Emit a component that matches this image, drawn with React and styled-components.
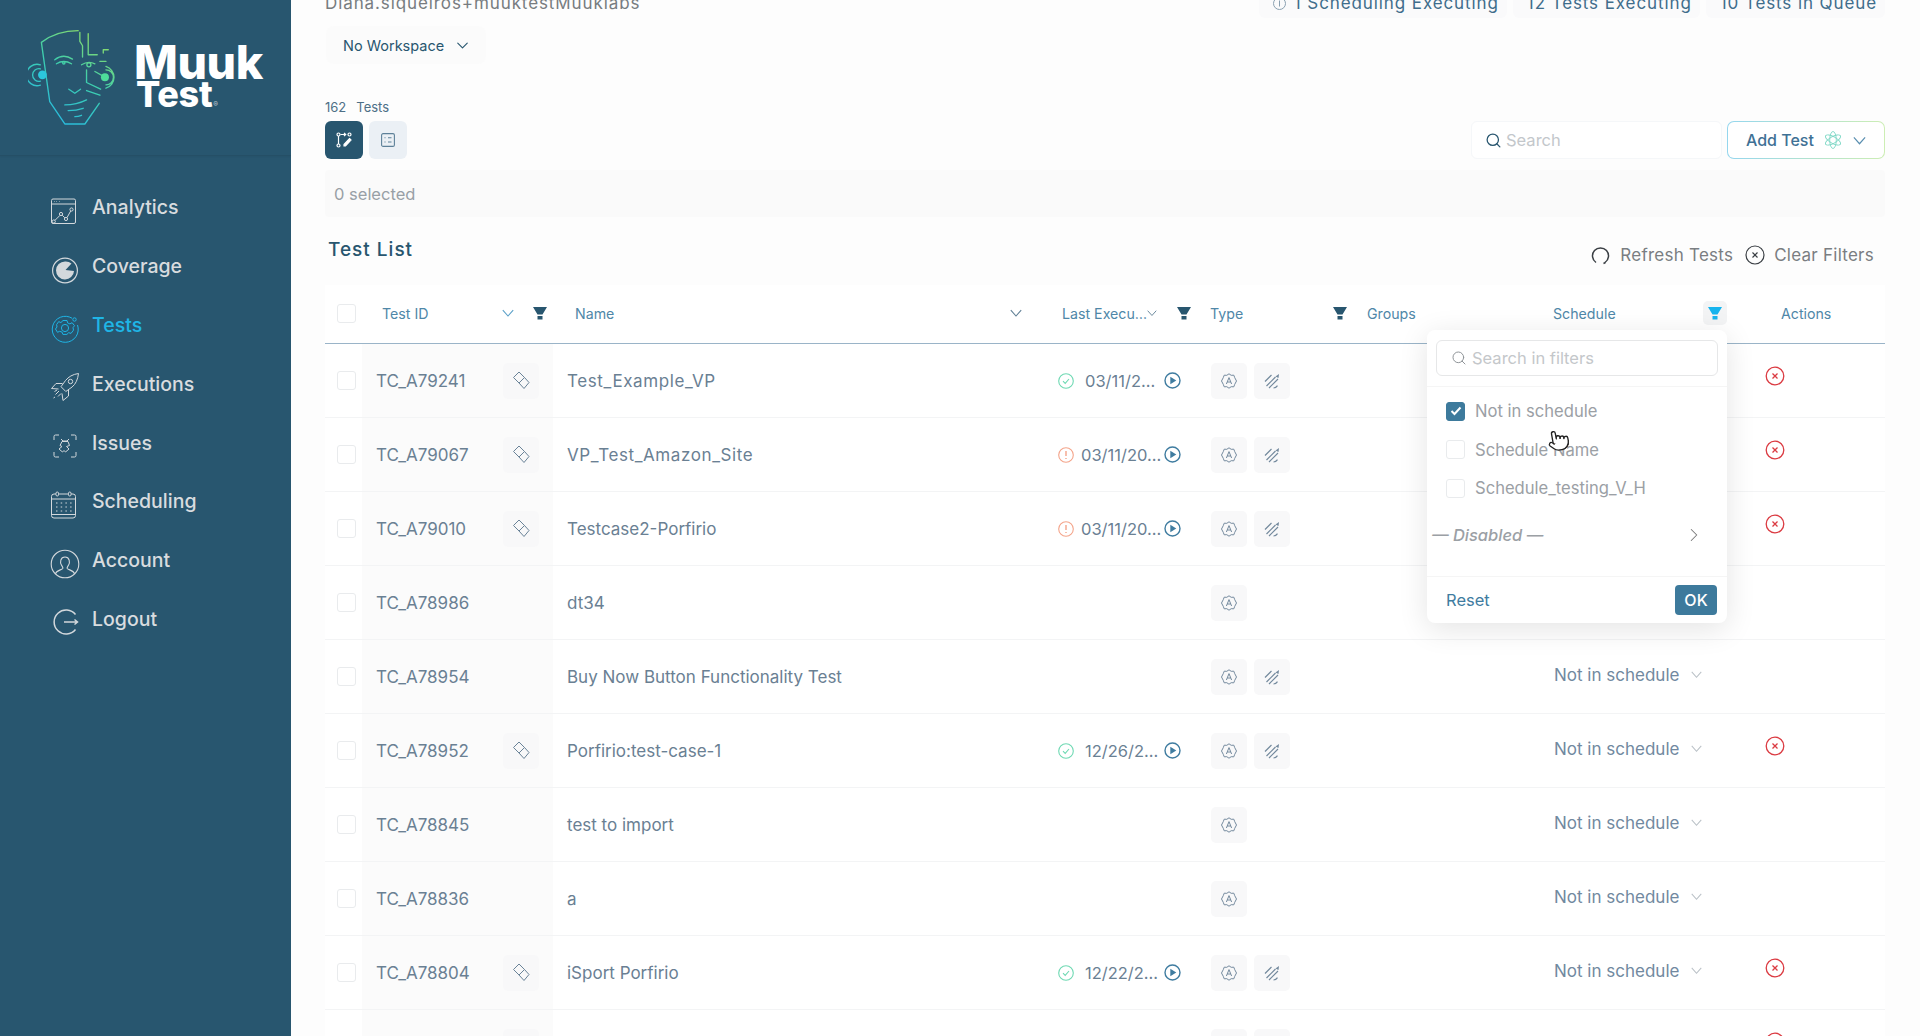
import React from 'react';
import styled, { createGlobalStyle } from 'styled-components';
import { Pointer, ChevronDown, ChevronRight, Search as SearchGlyph } from 'lucide-react';

const Global = createGlobalStyle`
  html, body { margin: 0; padding: 0; height: 100%; overflow: hidden; background: #fdfdfd; }
  * { box-sizing: border-box; }
  body { font-family: Inter, "Noto Sans", "Liberation Sans", sans-serif; }
`;

const Page = styled.div`display: flex; width: 1920px; height: 1036px; overflow: hidden; background: #fdfdfd;`;
const Sidebar = styled.aside`flex: 0 0 291px; background: #28566f; display: flex; flex-direction: column; box-shadow: 1px 0 3px rgba(0,0,0,.08);`;
const Brand = styled.div`height: 156px; padding: 28px 0 0 28px; display: flex; align-items: flex-start; border-bottom: 1px solid #254f66; box-shadow: 0 1px 2px rgba(0,0,0,.05);`;
const Wordmark = styled.div`margin: 14.5px 0 0 14px; color: #fff; font-weight: 800; display: flex; flex-direction: column;`;
const WordTop = styled.span`font-size: 46.5px; line-height: 38px; letter-spacing: -.4px;`;
const WordBottom = styled.span`font-size: 36px; line-height: 27px; letter-spacing: -.3px; margin-left: 2px; display: flex; align-items: baseline;`;
const Registered = styled.span`font-size: 7px; line-height: 7px; font-weight: 600; color: #b5c2ca; margin-left: 1px;`;
const Nav = styled.nav`padding-top: 22px; display: flex; flex-direction: column;`;
const NavItem = styled.a`
  height: 58.8px; padding-left: 50px; display: flex; align-items: center; gap: 12px;
  font-size: 19.5px; font-weight: 500; color: ${p => (p.$active ? '#1fb5e6' : '#d8dcdf')};
  svg { flex: 0 0 30px; margin-top: 7px; }
`;

const Main = styled.main`flex: 1; min-width: 0; padding: 0 35px 0 34px; margin-top: -12px; background: #fdfdfd;`;
const TopBar = styled.div`display: flex; justify-content: space-between; height: 27px;`;
const User = styled.div`font-size: 17px; line-height: 30px; letter-spacing: .9px; color: #777c80;`;
const StatusGroup = styled.div`display: flex; gap: 6px;`;
const StatusPill = styled.div`
  display: flex; align-items: center; gap: 8px; padding: 0 8px 0 14px; font-size: 17px; letter-spacing: .9px;
  height: 30px; color: #3f6d8b; background: #fafafb; border-radius: 6px;
`;
const Workspace = styled.div`
  width: 160px; height: 38px; margin: 11px 0 0 1px; padding-left: 17px; display: flex; align-items: center; gap: 9px;
  font-size: 14.5px; color: #28566f; background: #fbfbfb; border-radius: 8px;
`;
const Count = styled.div`margin-top: 35px; height: 16px; font-size: 13px; line-height: 16px; color: #4d6f86; display: flex; gap: 10px;`;
const Toolbar = styled.div`margin-top: 6px; height: 38px; display: flex; align-items: stretch;`;
const ViewButton = styled.button`
  width: 38px; border: 0; border-radius: 6px; padding: 0; margin-right: 6px; display: flex; align-items: center; justify-content: center;
  background: ${p => (p.$active ? '#28566f' : '#ebf0f5')};
`;
const SearchBox = styled.div`
  margin-left: auto; width: 251px; display: flex; align-items: center; gap: 4px; padding-left: 13px; background: #fff;
  border: 1px solid #f5f7f9; border-radius: 6px; font-size: 16.5px; color: #c3c7cb;
`;
const AddTest = styled.button`
  margin-left: 5px; width: 158px; display: flex; align-items: center; padding: 0 0 0 18px; border: 1px solid transparent; border-radius: 7px;
  background: linear-gradient(#fff,#fff) padding-box, linear-gradient(90deg,#94d6ee,#cdeeb4) border-box;
  font: 500 16px Inter, sans-serif; color: #3f7195;
  svg.atom { margin-left: 11px; }
`;
const ChevGap = styled.span`display: flex; margin-left: 12px;`;
const SelectedBar = styled.div`margin-top: 11px; height: 47px; padding-left: 9px; display: flex; align-items: center; background: #fafafa; border-radius: 4px; font-size: 16.5px; color: #98a0a6;`;
const TitleRow = styled.div`height: 68px; position: relative; display: flex; justify-content: space-between;`;
const Title = styled.h2`margin: 22px 0 0 3px; font-size: 19px; line-height: 22px; font-weight: 500; letter-spacing: 1px; color: #28566f;`;
const TitleActions = styled.div`display: flex; align-items: center; gap: 12px; padding: 23px 11px 0 0; height: 53px; font-size: 17px; letter-spacing: .25px; color: #7a7e82;`;
const TitleAction = styled.span`display: flex; align-items: center; gap: ${p => p.$gap}px;`;

const Table = styled.section`position: relative; background: #fff;`;
const COLS = '37px 191px 497px 150px 158px 186px 216px 125px';
const HeadRow = styled.div`display: grid; grid-template-columns: ${COLS}; height: 59px; padding-bottom: 2px; border-bottom: 1px solid #9ab4c8; font-size: 14.2px; color: #4f87a8;`;
const HeadCell = styled.div`display: flex; align-items: center; padding-left: ${p => p.$pl || 0}px; padding-right: ${p => p.$pr || 0}px;`;
const HeadLabel = styled.span`margin-right: auto; white-space: nowrap;`;
const FilterSlot = styled.span`
  display: flex; align-items: center; justify-content: center; width: 14px; height: 24px; margin-left: ${p => p.$ml || 0}px;
  ${p => p.$on && 'width: 24px; background: #f3f4f5; border-radius: 5px;'}
`;
const Row = styled.div`display: grid; grid-template-columns: ${COLS}; height: 74px; border-bottom: 1px solid #f3f4f5; font-size: 17px; color: #6a8093;`;
const CheckCell = styled.div`display: flex; align-items: center; justify-content: center; padding-left: 5px;`;
const Check = styled.span`
  width: 19px; height: 19px; border-radius: 3px; border: 1px solid #e9ebed; background: #fff; display: inline-flex; align-items: center; justify-content: center;
  ${p => p.$on && 'background: #3d7a9c; border-color: #3d7a9c;'}
`;
const IdCell = styled.div`background: #fbfbfb; display: flex; align-items: center; padding-left: 14px;`;
const IdText = styled.span`flex: 0 0 127px;`;
const IconTile = styled.span`width: 36px; height: 36px; border-radius: 5px; background: #f8f8f9; display: inline-flex; align-items: center; justify-content: center;`;
const NameCell = styled.div`display: flex; align-items: center; padding-left: 14px; letter-spacing: ${p => (p.$wide ? '.6px' : '0')};`;
const LastCell = styled.div`display: flex; align-items: center; padding: 0 19px 0 8px; font-size: 16.5px;`;
const DateText = styled.span`margin-left: ${p => (p.$warn ? 7 : 11)}px; white-space: nowrap;`;
const PlaySlot = styled.span`margin-left: auto; display: flex;`;
const TypeCell = styled.div`display: flex; align-items: center; gap: 7px; padding-left: 11px;`;
const ScheduleCell = styled.div`display: flex; align-items: center; padding: 0 0 4px 10px; color: #7189a0; gap: 12px;`;
const ActionCell = styled.div`display: flex; align-items: center; padding: 0 0 10px 5px;`;

const Popup = styled.div`
  position: absolute; left: 1102px; top: 45px; width: 300px; height: 293px; background: #fff; border-radius: 8px; z-index: 5;
  box-shadow: 0 6px 30px rgba(0,0,0,.11); display: flex; flex-direction: column;
`;
const PopupSearch = styled.div`height: 57px; padding: 10px 9px 11px; border-bottom: 1px solid #f5f5f5;`;
const PopupInput = styled.div`height: 36px; border: 1px solid #e6e7e8; border-radius: 6px; display: flex; align-items: center; gap: 5px; padding-left: 14px; font-size: 16.5px; color: #c4c7ca;`;
const PopupList = styled.div`padding: 5px 0 0 19px; display: flex; flex-direction: column; position: relative; height: 190px; border-bottom: 1px solid #f5f5f5;`;
const PopupItem = styled.label`height: 38.5px; display: flex; align-items: center; gap: 10px; font-size: 16.6px; color: #9ba0a5;`;
const DisabledRow = styled.div`
  margin: 12px 0 0 -14px; padding-right: 22px; height: 30px; display: flex; align-items: center; justify-content: space-between;
  font-size: 16.5px; font-style: italic; font-weight: 500; color: #9ba0a5;
`;
const PopupFoot = styled.div`flex: 1; display: flex; align-items: center; justify-content: space-between; padding: 0 10px 0 19px;`;
const ResetLink = styled.a`font-size: 16.5px; color: #3f7ca0;`;
const OkButton = styled.button`width: 42px; height: 30px; border: 0; border-radius: 4px; background: #3d7a9c; color: #fff; font: 500 16px Inter, sans-serif; padding: 0;`;
const Cursor = styled.span`position: absolute; left: 120px; top: 42px; display: flex; transform: rotate(-10deg);`;

const NavIcon = ({ kind, color }) => {
  const c = color;
  const common = { width: 30, height: 30, viewBox: '0 0 30 30', fill: 'none', stroke: c, strokeWidth: 1 };
  switch (kind) {
    case 'analytics':
      return <svg {...common}><rect x="1.5" y="3" width="24" height="24.5" rx="1.5" /><path d="M1.5 8h24" /><path d="M4 5.5h.5M6.5 5.5h.5M9 5.5h.5" /><circle cx="3.8" cy="25.5" r="1.6" /><circle cx="11" cy="18" r="1.6" /><circle cx="16" cy="23" r="1.6" /><circle cx="21.5" cy="13.5" r="1.6" /><path d="M5 24.3l5-5M12.2 19.2l2.6 2.6M17 21.6l3.7-6.6" /></svg>;
    case 'coverage':
      return <svg {...common} strokeWidth="1.2"><circle cx="15" cy="15.5" r="12.4" /><path fill={c} stroke="none" d="M15 6.5a9 9 0 1 0 9 9.4L15.5 15l6-6.4A9 9 0 0 0 15 6.5z" /></svg>;
    case 'tests':
      return <svg {...common}><path d="M22 5.2A13 13 0 1 0 27.5 12" /><circle cx="24.5" cy="6.5" r="1.7" /><path d="M13 7.5h4l.6 2.4 2.3 1 2.2-1.2 2.4 3-1.5 2 .5 2.4-2.5 3.3-2.3-.7-1.8 1.7h-4l-.8-2.2-2.4-.9-2.2 1-2-3.3 1.5-2-.4-2.4 2.1-3 2.2 1z" /><circle cx="15" cy="15" r="3.6" /></svg>;
    case 'rocket':
      return <svg {...common}><path d="M28.5 1.5c-6 .8-10 3.4-13 7l-4.500 6.200 4.800 4.800 6.300-4.500c3.600-3 5.700-7.500 6.400-13.500z" /><circle cx="20.500" cy="9.500" r="2.200" /><path d="M12.500 11.500l-6.500 0L1.500 16.500l7 .5M18.500 17.500v6.500L13 28.500l-1-7" /><path d="M9 19l-3.500 3.500M11 21.500l-3 3M7 18l-2.500 1.500M5 25l-1.500 1" /></svg>;
    case 'issues':
      return <svg {...common}><path d="M4 9V5.500Q4 4 5.500 4H9M21 4h3.500Q26 4 26 5.500V9M4 21v3.500Q4 26 5.500 26H9M21 26h3.500q1.500 0 1.500-1.500V21" /><path d="M11 8l2 2h4l2-2M12 10.500h6l1.500 4-3 1 2.500 2.500-3.500 3-1.500-1.500-1.500 1.500L9 18l3-2.500-2-1z" /></svg>;
    case 'calendar':
      return <svg {...common}><rect x="1.500" y="4" width="24" height="24" rx="2.500" /><path d="M1.500 9h24M1.500 24.500h24" /><rect x="6" y="2" width="2.500" height="4" rx="1.200" fill="#28566f" /><rect x="18.500" y="2" width="2.500" height="4" rx="1.200" fill="#28566f" /><path strokeDasharray="1.500 3.200" d="M6 13h16M6 17h16M6 21h16" /></svg>;
    case 'account':
      return <svg {...common} strokeWidth="1.100"><circle cx="15" cy="15" r="13.800" /><path d="M5.500 25c.5-3.500 6-4 7.300-5.500.5-1-.4-1.800-1.400-3.500-1.500-2.500-1.200-8 3.600-8 4.800 0 5.100 5.500 3.600 8-1 1.700-1.900 2.500-1.400 3.500 1.300 1.500 6.800 2 7.300 5.500" /></svg>;
    default:
      return <svg {...common} strokeWidth="1.500"><path d="M25.500 7.500A12 12 0 1 0 25.500 22.500" /><path d="M14 15h13.500M24.500 12.500l3 2.500-3 2.500" /></svg>;
  }
};

const Filter = ({ color = '#28566f' }) => (
  <svg width="14" height="13" viewBox="0 0 14 13" fill={color}><path d="M0 0h14l-4.500 7.500h-5zM4.500 9h5v3.500h-5z" /></svg>
);
const Chev = ({ size = 12, color = '#5aa0c8' }) => (
  <svg width={size} height={size} viewBox="0 0 12 12" fill="none" stroke={color} strokeWidth="1.100"><path d="M.8 3.200L6 9l5.200-5.800" /></svg>
);
const Diamonds = () => (
  <svg width="18" height="19" viewBox="0 0 18 19" fill="none" stroke="#6a8398" strokeWidth="1"><path d="M7 1L12.500 6.500 7 12 1.500 6.500zM12.500 6.500L17 11.500 12 17.500 7 12" /></svg>
);
const Badge = () => (
  <svg width="16" height="16" viewBox="0 0 16 16" fill="none" stroke="#73899d" strokeWidth="1"><path d="M8 .8l2.200 1.500 2.600-.1.9 2.400L15.500 8l-1.800 3.400-.9 2.400-2.600-.1L8 15.200l-2.200-1.500-2.600.1-.9-2.400L.5 8l1.800-3.400.9-2.400 2.600.1z" /><path d="M5.400 11L8 4.600l2.600 6.400M6.300 9h3.400" /></svg>
);
const Wand = () => (
  <svg width="16" height="16" viewBox="0 0 16 16" fill="none" stroke="#73899d" strokeWidth="1.200"><path d="M1 8.500L7.500 2M2.500 13L11.500 4M5 15L14 6M9.500 15c1.500 0 3-.8 4-2.300" /><path d="M11.500 3.500L15 1l-.5 4z" fill="#73899d" stroke="none" /></svg>
);
const Play = () => (
  <svg width="17" height="17" viewBox="0 0 17 17" fill="none"><circle cx="8.500" cy="8.500" r="7.500" stroke="#3f7ca0" strokeWidth="1.400" /><path d="M6.300 4.700l6 3.800-6 3.800z" fill="#3f7ca0" /></svg>
);
const Ok = () => (
  <svg width="16" height="16" viewBox="0 0 16 16" fill="none" stroke="#6fd9b3" strokeWidth="1.100"><circle cx="8" cy="8" r="7.300" /><path d="M5 8.200l2.200 2.200L11 6" /></svg>
);
const Warn = () => (
  <svg width="16" height="16" viewBox="0 0 16 16" fill="none" stroke="#f4a48a" strokeWidth="1.100"><circle cx="8" cy="8" r="7.300" /><path d="M8 4v5M8 11v1" strokeWidth="1.400" /></svg>
);
const Remove = () => (
  <svg width="20" height="20" viewBox="0 0 20 20" fill="none" stroke="#db3b42" strokeWidth="1.300"><circle cx="10" cy="10" r="8.800" /><path d="M7.500 7.500l5 5M12.500 7.500l-5 5" /></svg>
);
const Atom = () => (
  <svg className="atom" width="16" height="20" viewBox="0 0 16 20" fill="none" stroke="#7fd8c6" strokeWidth=".9"><ellipse cx="8" cy="10" rx="3.300" ry="8.500" /><ellipse cx="8" cy="10" rx="3.300" ry="8.500" transform="rotate(60 8 10)" /><ellipse cx="8" cy="10" rx="3.300" ry="8.500" transform="rotate(-60 8 10)" /></svg>
);

const Logo = () => (
  <svg width="92" height="97" viewBox="15 25 275 290" fill="none" strokeWidth="4" strokeLinecap="round" strokeLinejoin="round">
    <defs>
      <linearGradient id="lg" gradientUnits="userSpaceOnUse" x1="60" y1="310" x2="230" y2="40">
        <stop offset="0" stopColor="#25b7e6" />
        <stop offset=".55" stopColor="#3dcfae" />
        <stop offset="1" stopColor="#93dc62" />
      </linearGradient>
    </defs>
    <g stroke="url(#lg)">
      <path d="M165 33C120 33 85 45 55 68L80 245 125 312H185L228 250" />
      <path d="M52 135A32 32 0 1 0 52 196M52 147A19 19 0 1 0 52 184" />
      <path d="M248 140A34 34 0 0 1 248 205M248 150A22 22 0 0 1 248 195" />
      <path d="M95 120Q120 100 148 118M100 132Q122 118 145 132M175 135Q195 122 215 132" />
      <circle cx="122" cy="129" r="3.500" />
      <circle cx="197" cy="135" r="6" />
      <path d="M170 38V65L178 78V112M195 42V105H222M240 100V90H255M230 125H248" />
      <path d="M190 150V188L232 208M215 155L245 172M190 212L230 226" />
      <path d="M137 208L155 220 172 208M125 255Q160 255 190 240M135 272Q160 272 180 265M155 290Q165 290 175 286" />
    </g>
    <circle cx="58" cy="165" r="13" fill="#2cc7dd" />
    <circle cx="245" cy="172" r="12" fill="#4edc9a" />
  </svg>
);

const rows = [
  { id: 'TC_A79241', name: 'Test_Example_VP', st: 'ok', date: '03/11/2...', gem: 1, edit: 1, del: 1, covered: 1 },
  { id: 'TC_A79067', name: 'VP_Test_Amazon_Site', st: 'warn', date: '03/11/20...', gem: 1, edit: 1, del: 1, covered: 1 },
  { id: 'TC_A79010', name: 'Testcase2-Porfirio', st: 'warn', date: '03/11/20...', gem: 1, edit: 1, del: 1, covered: 1 },
  { id: 'TC_A78986', name: 'dt34', covered: 1 },
  { id: 'TC_A78954', name: 'Buy Now Button Functionality Test', edit: 1 },
  { id: 'TC_A78952', name: 'Porfirio:test-case-1', st: 'ok', date: '12/26/2...', gem: 1, edit: 1, del: 1 },
  { id: 'TC_A78845', name: 'test to import' },
  { id: 'TC_A78836', name: 'a' },
  { id: 'TC_A78804', name: 'iSport Porfirio', st: 'ok', date: '12/22/2...', gem: 1, edit: 1, del: 1 },
  { id: '', name: '', gem: 1, edit: 1, del: 1, covered: 1 },
];

const nav = [
  ['analytics', 'Analytics'], ['coverage', 'Coverage'], ['tests', 'Tests'], ['rocket', 'Executions'],
  ['issues', 'Issues'], ['calendar', 'Scheduling'], ['account', 'Account'], ['logout', 'Logout'],
];

export default function App() {
  return (
    <Page>
      <Global />
      <Sidebar>
        <Brand>
          <Logo />
          <Wordmark><WordTop>Muuk</WordTop><WordBottom>Test<Registered>®</Registered></WordBottom></Wordmark>
        </Brand>
        <Nav>
          {nav.map(([k, label]) => {
            const active = k === 'tests';
            return (
              <NavItem key={k} $active={active}>
                <NavIcon kind={k} color={active ? '#1fb5e6' : '#d3d8dc'} />
                {label}
              </NavItem>
            );
          })}
        </Nav>
      </Sidebar>
      <Main>
        <TopBar>
          <User>Diana.siqueiros+muuktestMuuklabs</User>
          <StatusGroup>
            <StatusPill>
              <svg width="13" height="13" viewBox="0 0 13 13" fill="none" stroke="#8aa0b0"><circle cx="6.500" cy="6.500" r="6" /><path d="M6.500 3.500v6" /></svg>
              1 Scheduling Executing
            </StatusPill>
            <StatusPill>12 Tests Executing</StatusPill>
            <StatusPill>10 Tests in Queue</StatusPill>
          </StatusGroup>
        </TopBar>
        <Workspace>No Workspace <ChevronDown size={19} strokeWidth={1.4} /></Workspace>
        <Count><span>162</span><span>Tests</span></Count>
        <Toolbar>
          <ViewButton $active>
            <svg width="16" height="16" viewBox="0 0 16 16" fill="none" stroke="#fff" strokeWidth="1.200"><circle cx="2.500" cy="2.500" r="1.500" /><circle cx="2.500" cy="13.500" r="1.500" /><circle cx="13.500" cy="2.500" r="1.500" /><path d="M2.500 4v8M4.500 2.500h5M8 1l1.700 1.500L8 4" /><path d="M13.500 6.500L15 8l-5.500 6H8v-1.500z" fill="#fff" /></svg>
          </ViewButton>
          <ViewButton>
            <svg width="14" height="14" viewBox="0 0 14 14" fill="none" stroke="#5e8199" strokeWidth="1.100"><rect x=".6" y=".6" width="12.800" height="12.800" rx="1.500" /><path d="M3.500 4.800h1M7 4.800h3.500M3.500 9h1M7 9h3.500" /></svg>
          </ViewButton>
          <SearchBox><SearchGlyph size={17} color="#28566f" strokeWidth={1.8} />Search</SearchBox>
          <AddTest>Add Test<Atom /><ChevGap><Chev color="#5a8fb0" size={13} /></ChevGap></AddTest>
        </Toolbar>
        <SelectedBar>0 selected</SelectedBar>
        <TitleRow>
          <Title>Test List</Title>
          <TitleActions>
            <TitleAction $gap={10}>
              <svg width="19" height="20" viewBox="0 0 19 20" fill="none" stroke="#3a3f44" strokeWidth="1.500"><path d="M5 17.500A8 8 0 1 1 14 17.500" /><path d="M12.500 18.500l2-1" /></svg>
              Refresh Tests
            </TitleAction>
            <TitleAction $gap={9}>
              <svg width="20" height="20" viewBox="0 0 20 20" fill="none" stroke="#3a3f44" strokeWidth="1.200"><circle cx="10" cy="10" r="9" /><path d="M7.500 7.500l5 5M12.500 7.500l-5 5" /></svg>
              Clear Filters
            </TitleAction>
          </TitleActions>
        </TitleRow>
        <Table>
          <HeadRow>
            <CheckCell><Check /></CheckCell>
            <HeadCell $pl={20} $pr={6}><HeadLabel>Test ID</HeadLabel><Chev /><FilterSlot $ml={19}><Filter /></FilterSlot></HeadCell>
            <HeadCell $pl={22} $pr={28}><HeadLabel>Name</HeadLabel><Chev color="#5f7f95" /></HeadCell>
            <HeadCell $pl={12} $pr={9}><HeadLabel>Last Execu…</HeadLabel><Chev color="#5f7f95" /><FilterSlot $ml={20}><Filter /></FilterSlot></HeadCell>
            <HeadCell $pl={10} $pr={11}><HeadLabel>Type</HeadLabel><FilterSlot><Filter /></FilterSlot></HeadCell>
            <HeadCell $pl={9}><HeadLabel>Groups</HeadLabel></HeadCell>
            <HeadCell $pl={9} $pr={33}><HeadLabel>Schedule</HeadLabel><FilterSlot $on><Filter color="#16b4ee" /></FilterSlot></HeadCell>
            <HeadCell $pl={21}><HeadLabel>Actions</HeadLabel></HeadCell>
          </HeadRow>
          {rows.map((r, i) => (
            <Row key={i}>
              <CheckCell><Check /></CheckCell>
              <IdCell><IdText>{r.id}</IdText>{r.gem && <IconTile><Diamonds /></IconTile>}</IdCell>
              <NameCell $wide={r.name.includes('_')}>{r.name}</NameCell>
              <LastCell>
                {r.st === 'ok' && <Ok />}
                {r.st === 'warn' && <Warn />}
                {r.st && <DateText $warn={r.st === 'warn'}>{r.date}</DateText>}
                {r.st && <PlaySlot><Play /></PlaySlot>}
              </LastCell>
              <TypeCell>
                <IconTile><Badge /></IconTile>
                {r.edit && <IconTile><Wand /></IconTile>}
              </TypeCell>
              <div />
              <ScheduleCell>{!r.covered && <>Not in schedule <Chev color="#b9c0c6" size={11} /></>}</ScheduleCell>
              <ActionCell>{r.del && <Remove />}</ActionCell>
            </Row>
          ))}
          <Popup>
            <PopupSearch>
              <PopupInput><SearchGlyph size={16} color="#8f9498" strokeWidth={1.5} />Search in filters</PopupInput>
            </PopupSearch>
            <PopupList>
              <PopupItem><Check $on><svg width="12" height="10" viewBox="0 0 12 10" fill="none" stroke="#fff" strokeWidth="2"><path d="M1.500 5l3 3 6-6.500" /></svg></Check>Not in schedule</PopupItem>
              <PopupItem><Check />Schedule Name</PopupItem>
              <PopupItem><Check />Schedule_testing_V_H</PopupItem>
              <DisabledRow>— Disabled —<ChevronRight size={22} strokeWidth={1.1} color="#777" /></DisabledRow>
              <Cursor><Pointer size={23} color="#222" fill="#fff" strokeWidth={1.4} /></Cursor>
            </PopupList>
            <PopupFoot>
              <ResetLink>Reset</ResetLink>
              <OkButton>OK</OkButton>
            </PopupFoot>
          </Popup>
        </Table>
      </Main>
    </Page>
  );
}
